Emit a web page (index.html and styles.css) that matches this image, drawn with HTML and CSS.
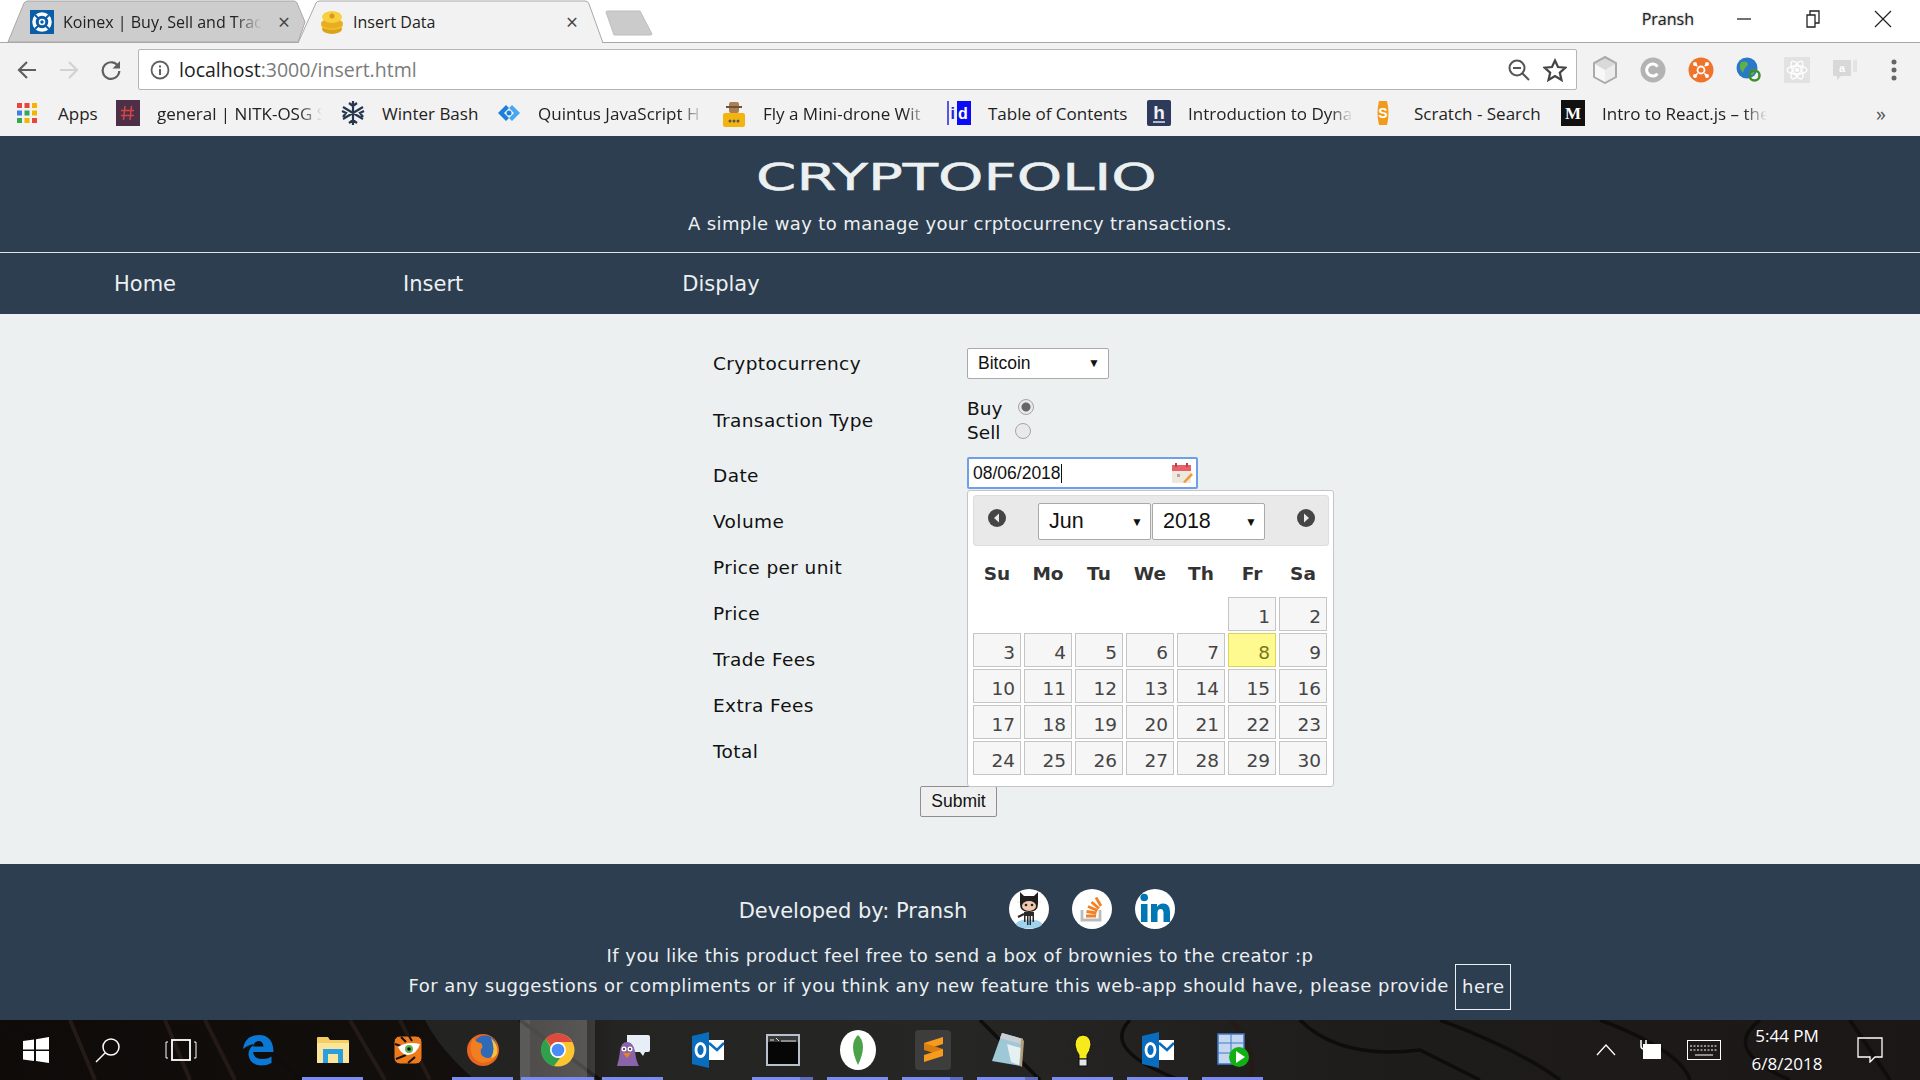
FILE: index.html
```html
<!DOCTYPE html>
<html lang="en">
<head>
    <meta charset="UTF-8">
    <title>Insert Data</title>
    <link rel="stylesheet" href="styles.css">
</head>
<body>
    <!-- browser tabs -->
    <div class="tabstrip">
        <div class="tab tab-off">
            <svg class="tab-shape" width="302" height="43" viewBox="0 0 302 43"><path d="M3 42 L19 3 Q20 1 23 1 H289 Q291 1 292 3 L300 22 L293 42 Z" fill="#cdcdcd" stroke="#a8a8a8"/></svg>
            <svg class="favicon" width="24" height="24" viewBox="0 0 24 24"><rect width="24" height="24" fill="#0a5ea8"/><circle cx="12" cy="12" r="8" fill="none" stroke="#fff" stroke-width="3.500"/><path d="M5 5 L19 19 M19 5 L5 19" stroke="#0a5ea8" stroke-width="2"/><circle cx="12" cy="12" r="2.500" fill="none" stroke="#fff" stroke-width="1.500"/></svg>
            <span class="tab-title fade">Koinex | Buy, Sell and Trac</span>
            <span class="tab-x">×</span>
        </div>
        <div class="tab tab-on">
            <svg class="tab-shape" width="310" height="43" viewBox="0 0 310 43"><path d="M1 43 L19 3 Q20 1 23 1 H288 Q291 1 292 4 L306 43 Z" fill="#f2f2f2" stroke="#a8a8a8"/><path d="M2 42.500 H305" stroke="#f2f2f2"/></svg>
            <svg class="favicon" width="24" height="24" viewBox="0 0 24 24"><ellipse cx="12" cy="19" rx="10" ry="5" fill="#dba21a"/><ellipse cx="12" cy="15" rx="11" ry="5" fill="#f2c12e"/><ellipse cx="12" cy="13.500" rx="11" ry="5" fill="#e6ae20"/><ellipse cx="12" cy="7" rx="10" ry="6" fill="#f7cf3f"/><circle cx="12" cy="6" r="2.500" fill="#d99a17"/></svg>
            <span class="tab-title">Insert Data</span>
            <span class="tab-x">×</span>
        </div>
        <svg class="newtab" width="50" height="26" viewBox="0 0 50 26"><path d="M2 2 Q2 1 4 1 H36 L48 24 Q48 25 46 25 H10 Z" fill="#cbcbcb" stroke="#bdbdbd"/></svg>
        <div class="winctl">
            <span class="user">Pransh</span>
            <svg width="16" height="16" viewBox="0 0 16 16"><path d="M1 8 H15" stroke="#222" stroke-width="1.300"/></svg>
            <svg width="16" height="18" viewBox="0 0 16 18"><path d="M2 5 H10 V17 H2 Z M5 5 V1 H14 V13 H10" fill="none" stroke="#222" stroke-width="1.300"/></svg>
            <svg width="18" height="18" viewBox="0 0 18 18"><path d="M1 1 L17 17 M17 1 L1 17" stroke="#222" stroke-width="1.200"/></svg>
        </div>
    </div>

    <!-- address bar -->
    <div class="toolbar">
        <svg width="22" height="22" viewBox="0 0 22 22"><path d="M20 11 H3 M11 3 L3 11 L11 19" fill="none" stroke="#5f5f5f" stroke-width="2.200"/></svg>
        <svg width="22" height="22" viewBox="0 0 22 22"><path d="M2 11 H19 M11 3 L19 11 L11 19" fill="none" stroke="#d2d2d2" stroke-width="2.200"/></svg>
        <svg width="22" height="22" viewBox="0 0 22 22"><path d="M18.500 8 A8.300 8.300 0 1 0 19.300 12" fill="none" stroke="#5f5f5f" stroke-width="2.200"/><path d="M20 2 V9.500 H12.500 Z" fill="#5f5f5f"/></svg>
        <div class="omnibox">
            <svg width="20" height="20" viewBox="0 0 20 20"><circle cx="10" cy="10" r="8.500" fill="none" stroke="#5f5f5f" stroke-width="1.800"/><path d="M10 9 V15 M10 5.500 V7.500" stroke="#5f5f5f" stroke-width="2"/></svg>
            <span class="url"><b>localhost</b>:3000/insert.html</span>
            <svg class="omni-zoom" width="24" height="24" viewBox="0 0 24 24"><circle cx="10" cy="10" r="7.500" fill="none" stroke="#555" stroke-width="2"/><path d="M6 10 H14 M15.500 15.500 L22 22" stroke="#555" stroke-width="2"/></svg>
            <svg width="24" height="24" viewBox="0 0 24 24"><path d="M12 2.500 L15 9 L22.500 9.700 L16.800 14.600 L18.500 22 L12 18.100 L5.500 22 L7.200 14.600 L1.500 9.700 L9 9 Z" fill="none" stroke="#444" stroke-width="2.200"/></svg>
        </div>
        <div class="exts">
            <svg width="26" height="28" viewBox="0 0 26 28"><path d="M13 1 L24 7 V21 L13 27 L2 21 V7 Z" fill="#d9d9d9" stroke="#aaa" stroke-width="2"/><path d="M13 14 L23 8 V20.500 L13 26 Z" fill="#ececec"/><path d="M3 8 L13 14 V26 L3 20.500 Z" fill="#f7f7f7"/></svg>
            <svg width="26" height="26" viewBox="0 0 26 26"><circle cx="13" cy="13" r="12.500" fill="#b3b3b3"/><path d="M17.500 9.500 A6 6 0 1 0 17.500 16.500" fill="none" stroke="#fff" stroke-width="3"/></svg>
            <svg width="26" height="26" viewBox="0 0 26 26"><circle cx="13" cy="13" r="12.500" fill="#f0732c"/><circle cx="13" cy="13" r="3.500" fill="none" stroke="#fff" stroke-width="1.800"/><path d="M6.500 6.500 L19.500 19.500 M19.500 6.500 L6.500 19.500" stroke="#fff" stroke-width="1.500" stroke-dasharray="4 10"/><circle cx="7" cy="7" r="2" fill="#fff"/><circle cx="19" cy="7" r="2" fill="#fff"/><circle cx="7" cy="19" r="2" fill="#fff"/><circle cx="19" cy="19" r="2" fill="#fff"/></svg>
            <svg width="26" height="26" viewBox="0 0 26 26"><circle cx="11" cy="11" r="10.500" fill="#2a78c8"/><path d="M5 5 Q12 3 12 8 Q8 11 7 16 Q2 11 5 5 M14 13 L20 12 L17 18 L14 18 Z" fill="#5fb04d"/><circle cx="18.500" cy="18.500" r="5" fill="none" stroke="#3d8f2c" stroke-width="2.500"/><path d="M14 13 L19 12.500 L16 16 Z" fill="#3d8f2c"/></svg>
            <svg width="26" height="26" viewBox="0 0 26 26"><rect width="26" height="26" rx="1" fill="#e2e2e2"/><ellipse cx="13" cy="13" rx="10" ry="4" fill="none" stroke="#fff" stroke-width="1.300"/><ellipse cx="13" cy="13" rx="10" ry="4" fill="none" stroke="#fff" stroke-width="1.300" transform="rotate(60 13 13)"/><ellipse cx="13" cy="13" rx="10" ry="4" fill="none" stroke="#fff" stroke-width="1.300" transform="rotate(-60 13 13)"/><circle cx="13" cy="13" r="2" fill="#fff"/></svg>
            <svg width="26" height="24" viewBox="0 0 26 24"><path d="M1 3 Q1 2 2 2 H19 V18 H9 L5 22 V18 H2 Q1 18 1 17 Z" fill="#d8d8d8"/><path d="M21 3 L25 1 V15 L21 13 Z" fill="#e4e4e4"/><text x="10" y="14" class="ext-a">a</text></svg>
            <svg class="kebab" width="6" height="22" viewBox="0 0 6 22"><circle cx="3" cy="3" r="2.500" fill="#666"/><circle cx="3" cy="11" r="2.500" fill="#666"/><circle cx="3" cy="19" r="2.500" fill="#666"/></svg>
        </div>
    </div>

    <!-- bookmarks -->
    <div class="bookmarks">
        <div class="bm bm-apps">
            <svg width="22" height="22" viewBox="0 0 22 22"><rect x="1" y="1" width="5" height="5" fill="#e8453c"/><rect x="8.500" y="1" width="5" height="5" fill="#e8453c"/><rect x="16" y="1" width="5" height="5" fill="#f4b400"/><rect x="1" y="8.500" width="5" height="5" fill="#3f7fe6"/><rect x="8.500" y="8.500" width="5" height="5" fill="#34a853"/><rect x="16" y="8.500" width="5" height="5" fill="#f4b400"/><rect x="1" y="16" width="5" height="5" fill="#34a853"/><rect x="8.500" y="16" width="5" height="5" fill="#f4b400"/><rect x="16" y="16" width="5" height="5" fill="#e8453c"/></svg>
            <span class="bm-text w-apps">Apps</span>
        </div>
        <div class="bm">
            <svg width="24" height="26" viewBox="0 0 24 26"><rect width="24" height="26" fill="#4d2f47"/><path d="M9 6 L7.500 20 M15.500 6 L14 20 M5 10.500 H18 M5 15.500 H18" stroke="#d64545" stroke-width="1.500"/></svg>
            <span class="bm-text w-long fade">general | NITK-OSG S</span>
        </div>
        <div class="bm">
            <svg width="24" height="26" viewBox="0 0 24 26"><path d="M12 1 V25 M2 7 L22 19 M22 7 L2 19 M8 3 L12 6 L16 3 M8 23 L12 20 L16 23 M1 11 L5 13 L2 17 M23 11 L19 13 L22 17" fill="none" stroke="#27364f" stroke-width="2.200"/></svg>
            <span class="bm-text w-winter">Winter Bash</span>
        </div>
        <div class="bm">
            <svg width="24" height="22" viewBox="0 0 24 22"><path d="M9 3 L1 11 L9 19 L12 16 L7 11 L12 6 Z" fill="#1c7fdb"/><path d="M15 3 L23 11 L15 19 L12 16 L17 11 L12 6 Z" fill="#45a8f0"/><circle cx="12" cy="11" r="2.500" fill="#1c7fdb"/></svg>
            <span class="bm-text w-long fade">Quintus JavaScript H</span>
        </div>
        <div class="bm">
            <svg width="24" height="28" viewBox="0 0 24 28"><rect x="1" y="14" width="22" height="14" rx="2" fill="#f3b40f"/><rect x="7" y="3" width="10" height="11" rx="2" fill="#a97f55"/><path d="M4 8 H20" stroke="#6e5334" stroke-width="2"/><circle cx="8" cy="22" r="1.500" fill="#555"/><circle cx="12" cy="22" r="1.500" fill="#555"/><circle cx="16" cy="22" r="1.500" fill="#555"/></svg>
            <span class="bm-text w-long fade">Fly a Mini-drone Wit</span>
        </div>
        <div class="bm">
            <svg width="24" height="26" viewBox="0 0 24 26"><path d="M1 1 V25" stroke="#2323e0" stroke-width="1.500"/><rect x="10" y="1" width="14" height="24" fill="#0b0bf5"/><text x="3.500" y="19" class="id-i">i</text><text x="11" y="19" class="id-d">d</text></svg>
            <span class="bm-text w-table">Table of Contents</span>
        </div>
        <div class="bm">
            <svg width="24" height="26" viewBox="0 0 24 26"><rect width="24" height="26" rx="2" fill="#2e3a5c"/><text x="12" y="19" class="h-mark">h</text><path d="M6 22 H18" stroke="#dfe3ee" stroke-width="1.500"/></svg>
            <span class="bm-text w-long fade">Introduction to Dyna</span>
        </div>
        <div class="bm bm-s">
            <svg width="22" height="28" viewBox="0 0 22 28"><path d="M7 2 H15 Q18 14 15 26 H7 Q4 14 7 2 Z" fill="#f19a1c"/><text x="11" y="19" class="s-mark">S</text></svg>
            <span class="bm-text w-scratch">Scratch - Search</span>
        </div>
        <div class="bm">
            <svg width="24" height="26" viewBox="0 0 24 26"><rect width="24" height="26" fill="#111"/><text x="12" y="19" class="m-mark">M</text></svg>
            <span class="bm-text w-long fade">Intro to React.js – the</span>
        </div>
        <span class="more">»</span>
    </div>

    <!-- the page itself -->
    <header class="site-head">
        <h1 class="logo">CRYPTOFOLIO</h1>
        <p class="tagline">A simple way to manage your crptocurrency transactions.</p>
    </header>
    <nav class="site-nav">
        <a href="#" class="nav-home">Home</a>
        <a href="#" class="nav-insert">Insert</a>
        <a href="#">Display</a>
    </nav>

    <main class="content">
        <form class="insert-form">
            <div class="row row-first">
                <label>Cryptocurrency</label>
                <div class="fake-select coin">Bitcoin<span class="caret">▼</span></div>
            </div>
            <div class="row row-radio">
                <label>Transaction Type</label>
                <div class="radios">
                    <div class="radio-line">Buy <span class="radio radio-checked"></span></div>
                    <div class="radio-line">Sell <span class="radio radio-sell"></span></div>
                </div>
            </div>
            <div class="row">
                <label>Date</label>
                <div class="date-wrap">
                    <div class="date-input">
                        <span class="date-value">08/06/2018</span>
                        <svg width="22" height="22" viewBox="0 0 22 22"><rect x="1" y="3" width="19" height="18" fill="#efe9dc"/><rect x="1" y="3" width="19" height="6" fill="#e8606a"/><path d="M5 1 V5 M16 1 V5" stroke="#b5434c" stroke-width="2"/><rect x="6" y="12" width="3" height="3" fill="#aaa"/><path d="M12 20 L20 11 L22 13 L14 21 Z" fill="#ee9a3a"/></svg>
                    </div>
                    <div class="datepicker">
                        <div class="dp-head">
                            <svg width="18" height="18" viewBox="0 0 18 18"><circle cx="9" cy="9" r="9" fill="#454545"/><path d="M11 4.500 L6 9 L11 13.500 Z" fill="#e9e9e9"/></svg>
                            <div class="dp-selects">
                                <div class="fake-select dp-sel">Jun<span class="caret">▼</span></div>
                                <div class="fake-select dp-sel">2018<span class="caret">▼</span></div>
                            </div>
                            <svg width="18" height="18" viewBox="0 0 18 18"><circle cx="9" cy="9" r="9" fill="#454545"/><path d="M7 4.500 L12 9 L7 13.500 Z" fill="#e9e9e9"/></svg>
                        </div>
                        <div class="dp-grid">
                            <span class="dow">Su</span><span class="dow">Mo</span><span class="dow">Tu</span><span class="dow">We</span><span class="dow">Th</span><span class="dow">Fr</span><span class="dow">Sa</span>
                            <span class="blank"></span><span class="blank"></span><span class="blank"></span><span class="blank"></span><span class="blank"></span><a class="day">1</a><a class="day">2</a>
                            <a class="day">3</a><a class="day">4</a><a class="day">5</a><a class="day">6</a><a class="day">7</a><a class="day today">8</a><a class="day">9</a>
                            <a class="day">10</a><a class="day">11</a><a class="day">12</a><a class="day">13</a><a class="day">14</a><a class="day">15</a><a class="day">16</a>
                            <a class="day">17</a><a class="day">18</a><a class="day">19</a><a class="day">20</a><a class="day">21</a><a class="day">22</a><a class="day">23</a>
                            <a class="day">24</a><a class="day">25</a><a class="day">26</a><a class="day">27</a><a class="day">28</a><a class="day">29</a><a class="day">30</a>
                        </div>
                    </div>
                </div>
            </div>
            <div class="row"><label>Volume</label></div>
            <div class="row"><label>Price per unit</label></div>
            <div class="row"><label>Price</label></div>
            <div class="row"><label>Trade Fees</label></div>
            <div class="row"><label>Extra Fees</label></div>
            <div class="row"><label>Total</label></div>
            <div class="submit-row"><button type="button" class="submit">Submit</button></div>
        </form>
    </main>

    <footer class="site-foot">
        <div class="dev">
            <span class="dev-name">Developed by: Pransh</span>
            <svg width="40" height="40" viewBox="0 0 40 40"><circle cx="20" cy="20" r="20" fill="#fff"/><ellipse cx="20" cy="35" rx="13" ry="4.500" fill="#9fd2ec"/><path d="M8 13 H32" stroke="#e6e6e6"/><path d="M15 23 H25 V33 H23.500 V27 H22 V36 H20.500 V27 H19.500 V36 H18 V27 H16.500 V33 H15 Z" fill="#2a2a2a"/><path d="M15 25 L9 28" stroke="#2a2a2a" stroke-width="2"/><path d="M11 3 L15 7 H25 L29 3 V15 Q29 23 20 23 Q11 23 11 15 Z" fill="#1e1e1e"/><ellipse cx="20" cy="17" rx="7" ry="5" fill="#f1c7ad"/><circle cx="17" cy="16" r="1.300" fill="#222"/><circle cx="23" cy="16" r="1.300" fill="#222"/></svg>
            <svg width="40" height="40" viewBox="0 0 40 40"><circle cx="20" cy="20" r="20" fill="#fff"/><path d="M10 21 V31 H28 V21" fill="none" stroke="#bcbbbb" stroke-width="2.800"/><path d="M14 27 H24 M14.500 22.500 L24.500 24 M16 17.500 L25.500 21.500 M19.500 13 L27 19.500 M24 8.500 L29 17" stroke="#f48024" stroke-width="2.800"/></svg>
            <svg width="40" height="40" viewBox="0 0 40 40"><circle cx="20" cy="20" r="20" fill="#fff"/><rect x="6" y="15" width="6.500" height="18" fill="#0077b5"/><circle cx="9.200" cy="8.500" r="3.800" fill="#0077b5"/><path d="M16 15 H22 V18 Q24 14.500 28 14.500 Q35 14.500 35 23 V33 H28.500 V24 Q28.500 20 25.500 20 Q22.500 20 22.500 24 V33 H16 Z" fill="#0077b5"/></svg>
        </div>
        <p class="foot-line">If you like this product feel free to send a box of brownies to the creator :p</p>
        <p class="foot-line foot-last">For any suggestions or compliments or if you think any new feature this web-app should have, please provide <a href="#" class="here">here</a></p>
    </footer>

    <!-- windows taskbar -->
    <div class="taskbar">
        <svg class="wood" width="1920" height="60" viewBox="0 0 1920 60"><path d="M425 0 H530 V60 H475 Q440 30 425 0 Z" fill="#232322"/><path d="M0 8 Q60 30 50 60 M120 0 Q150 30 135 60 M240 0 L300 60 M520 0 L600 60 M980 0 Q1010 30 1040 60 M1130 0 Q1100 30 1180 60 M1300 0 Q1340 40 1420 30 L1480 60 M1440 0 Q1520 30 1560 60 M1600 0 Q1680 30 1690 60 M1760 0 Q1720 30 1790 60 M1850 0 L1890 60" fill="none" stroke="#0f0d0c" stroke-width="3.500"/><path d="M70 0 L95 60 M165 0 L190 60 M205 0 L235 60 M350 0 L385 60 M400 0 L430 60 M1230 0 Q1260 30 1250 60" fill="none" stroke="#241b16" stroke-width="4"/></svg>
        <div class="task-left">
            <svg width="26" height="26" viewBox="0 0 26 26"><path d="M0 4 L11 2.500 V12.500 H0 Z M13 2.200 L26 0 V12.500 H13 Z M0 14 H11 V24 L0 22.500 Z M13 14 H26 V26 L13 24 Z" fill="#fff"/></svg>
            <svg width="26" height="26" viewBox="0 0 26 26"><circle cx="16" cy="10" r="8" fill="none" stroke="#fff" stroke-width="1.500"/><path d="M10 16 L1 25" stroke="#fff" stroke-width="1.500"/></svg>
            <svg class="t-view" width="32" height="22" viewBox="0 0 32 22"><rect x="7" y="1" width="18" height="20" fill="none" stroke="#fff" stroke-width="1.800"/><path d="M3 3 H1 V19 H3 M29 3 H31 V19 H29" fill="none" stroke="#fff"/></svg>
        </div>
        <div class="task-apps">
            <div class="app"><svg width="32" height="32" viewBox="0 0 32 32"><path d="M1 15 Q3 1 17 1 Q31 1 31.500 18 H11 Q12 25 20 25 Q26 25 29.500 22.500 V29 Q25 31.500 19 31.500 Q8 31 6.500 21 Q6 14 13 10 Q8 10 1 15 Z M11 12.500 H21.500 Q21 7 16.500 7 Q12.500 7 11 12.500 Z" fill="#0a78d4" fill-rule="evenodd"/></svg></div>
            <div class="app run"><svg width="32" height="28" viewBox="0 0 32 28"><path d="M0 2 Q0 1 1 1 H11 L13 4 H31 Q32 4 32 5 V27 H0 Z" fill="#f1cd62"/><path d="M0 7 H32 V26 Q32 27 31 27 H1 Q0 27 0 26 Z" fill="#fbe59a"/><path d="M6 27 V13 H26 V27 H21 V18 H11 V27 Z" fill="#2a9fe0"/></svg></div>
            <div class="app"><svg width="30" height="30" viewBox="0 0 30 30"><rect x="1" y="1" width="28" height="28" rx="6" fill="#ef7a1a" stroke="#111"/><path d="M8 2 L13 7 M16 1 L19 6 M3 24 L13 20 M15 28 L22 22 M2 9 L8 11" stroke="#111" stroke-width="2"/><path d="M5 12 Q14 6 27 9 Q24 19 15 20 Q9 20 5 12 Z" fill="#fff"/><circle cx="16" cy="14" r="4" fill="#62b24f"/><circle cx="16" cy="14" r="1.800" fill="#111"/></svg></div>
            <div class="app run"><svg width="34" height="34" viewBox="0 0 34 34"><circle cx="17" cy="17" r="16" fill="#e8641f"/><circle cx="19" cy="14" r="11.500" fill="#2e6ab8"/><path d="M7 5 Q2 15 7 24 Q14 33 25 28 Q31 24 33 15 Q30 26 21 25 Q13 23 15 16 Q18 14 15 10 Q11 10 7 5 Z" fill="#ef7f20"/><path d="M25 5 Q33 12 31 21 Q28 25 25 25 Q30 16 25 5 Z" fill="#f9c23c"/></svg></div>
            <div class="app active"><svg width="34" height="34" viewBox="0 0 34 34"><circle cx="17" cy="17" r="16.500" fill="#fbc531"/><path d="M17 .5 A16.500 16.500 0 0 1 31.300 9 H17 A8 8 0 0 0 9.700 13.500 L4.500 5.500 A16.500 16.500 0 0 1 17 .5 Z" fill="#dd4b3e"/><path d="M4.500 5.500 L11.500 18 A8 8 0 0 0 19 25 L13 33 A16.500 16.500 0 0 1 4.500 5.500 Z" fill="#2fa04b"/><circle cx="17" cy="17" r="8" fill="#fff"/><circle cx="17" cy="17" r="6.300" fill="#4a8bf5"/></svg></div>
            <div class="app run"><svg width="34" height="34" viewBox="0 0 34 34"><path d="M11 2 H32 Q34 2 34 4 V17 Q34 19 32 19 H29 L27 23 L24 19 H11 Z" fill="#e8eef8"/><path d="M1 33 Q3 27 4 18 Q5 9 11 9 Q17 9 19 18 Q20 28 23 33 Z" fill="#8a63a8"/><circle cx="8" cy="16" r="2.500" fill="#fff"/><circle cx="14" cy="16" r="2.500" fill="#fff"/><circle cx="8" cy="16" r="1" fill="#222"/><circle cx="14" cy="16" r="1" fill="#222"/><path d="M7 20 H15 L11 25 Z" fill="#e8841f"/></svg></div>
            <div class="app"><svg width="32" height="36" viewBox="0 0 32 36"><path d="M0 4 L17 0 V36 L0 32 Z" fill="#0a6cbd"/><path d="M17 8 H32 V28 H17 Z" fill="#fff"/><path d="M17 11 L25 18 L32 11" fill="none" stroke="#0a6cbd" stroke-width="2.500"/><ellipse cx="8.500" cy="18" rx="4.500" ry="6.500" fill="none" stroke="#fff" stroke-width="2.800"/></svg></div>
            <div class="app run stack"><svg width="34" height="32" viewBox="0 0 34 32"><rect width="34" height="32" fill="#b7c2cc"/><rect x="2" y="2" width="30" height="6" fill="#3a3a3a"/><rect x="2" y="8" width="30" height="22" fill="#060606"/><path d="M4 6 H8 M10 4 L13 7 M15 7 H30" stroke="#ddd"/></svg></div>
            <div class="app run"><svg width="36" height="40" viewBox="0 0 36 40"><ellipse cx="18" cy="20" rx="18" ry="20" fill="#fff"/><path d="M18 5 Q28 14 18 35 Q8 14 18 5 Z" fill="#4ba24a"/></svg></div>
            <div class="app run stack"><svg width="36" height="40" viewBox="0 0 36 40"><rect width="36" height="40" rx="4" fill="#3d3d3d"/><path d="M28 7 L9 13 V20 L28 14 Z" fill="#f79b1e"/><path d="M9 13 L28 19 V26 L9 20 Z" fill="#d87d10"/><path d="M28 19 L9 25 V32 L28 26 Z" fill="#f79b1e"/></svg></div>
            <div class="app run stack"><svg width="34" height="36" viewBox="0 0 34 36"><path d="M11 1 L32 7 L30 34 L1 29 Z" fill="#9fc8d6"/><path d="M11 1 L32 7 L30 12 L9 6 Z" fill="#c9ced3"/><path d="M16 12 L30 16 L28 33 L20 30 Z" fill="#e6f0f3"/><path d="M30 6 L33 9 L31 35 L29 34 Z" fill="#b3a07a"/></svg></div>
            <div class="app run"><svg width="30" height="36" viewBox="0 0 30 36"><path d="M4 3 L7 7 M26 3 L23 7 M0 14 H4 M26 14 H30 M2 26 L6 22 M28 26 L24 22" stroke="#222" stroke-width="1.500"/><path d="M15 3 Q23 4 23 13 Q22 19 19 23 V27 H11 V23 Q8 19 7 13 Q7 4 15 3 Z" fill="#f7ea1c" stroke="#111"/><rect x="11" y="27" width="8" height="7" fill="#e4e4e4" stroke="#111"/></svg></div>
            <div class="app run"><svg width="32" height="36" viewBox="0 0 32 36"><path d="M0 4 L17 0 V36 L0 32 Z" fill="#0a6cbd"/><path d="M17 8 H32 V28 H17 Z" fill="#fff"/><path d="M17 11 L25 18 L32 11" fill="none" stroke="#0a6cbd" stroke-width="2.500"/><ellipse cx="8.500" cy="18" rx="4.500" ry="6.500" fill="none" stroke="#fff" stroke-width="2.800"/></svg></div>
            <div class="app run"><svg width="32" height="34" viewBox="0 0 32 34"><rect x="1" y="1" width="26" height="30" fill="#c5d8f0" stroke="#3f78c8" stroke-width="1.500"/><path d="M1 10 H27 M1 20 H27 M14 1 V31" stroke="#3f78c8"/><circle cx="22" cy="24" r="10" fill="#12b012"/><path d="M19 18 L28 24 L19 30 Z" fill="#fff"/></svg></div>
        </div>
        <div class="tray">
            <svg width="20" height="12" viewBox="0 0 20 12"><path d="M1 11 L10 1 L19 11" fill="none" stroke="#fff" stroke-width="1.300"/></svg>
            <svg class="t-batt" width="26" height="24" viewBox="0 0 26 24"><rect x="6" y="6" width="18" height="15" fill="#fff"/><path d="M4 2 V8 Q4 11 7 11 Q9 11 9 8 V2" fill="none" stroke="#fff" stroke-width="1.500"/></svg>
            <svg class="t-keys" width="34" height="20" viewBox="0 0 34 20"><rect x=".5" y=".5" width="33" height="19" fill="none" stroke="#fff"/><path d="M3 6 H31 M3 10 H31" stroke="#fff" stroke-dasharray="2 1.500"/><path d="M8 15 H26" stroke="#fff"/></svg>
            <div class="clock"><span>5:44 PM</span><span>6/8/2018</span></div>
            <svg width="26" height="26" viewBox="0 0 26 26"><path d="M1 1 H25 V20 H18 L13 25 V20 H1 Z" fill="none" stroke="#fff" stroke-width="1.300"/></svg>
        </div>
    </div>
</body>
</html>
```

FILE: styles.css
```css
*{
    margin: 0;
    padding: 0;
    box-sizing: border-box;
}
body{
    width: 1920px;
    height: 1080px;
    overflow: hidden;
    display: flex;
    flex-direction: column;
    background: #ecf0f1;
    font-family: "DejaVu Sans", sans-serif;
}
svg{
    flex: none;
    display: block;
}
.fade{
    -webkit-mask-image: linear-gradient(to right, #000 86%, transparent 100%);
}

/* tabs */
.tabstrip{
    height: 43px;
    background: #fff;
    border-bottom: 1px solid #a8a8a8;
    display: flex;
    padding-left: 5px;
    font-family: "Open Sans", sans-serif;
}
.tab{
    position: relative;
    width: 300px;
    height: 43px;
    display: flex;
    align-items: center;
    font-size: 16px;
    color: #222;
}
.tab-shape{
    position: absolute;
    left: 0;
    top: 0;
}
.tab-off{
    padding: 0 15px 0 25px;
}
.tab-on{
    padding: 0 19px 0 23px;
    margin-left: -8px;
}
.tab .favicon{
    position: relative;
    margin-right: 9px;
}
.tab-title{
    position: relative;
    white-space: nowrap;
}
.tab-x{
    position: relative;
    font-size: 21px;
    margin-left: auto;
    color: #444;
}
.newtab{
    margin: 10px 0 0 7px;
}
.winctl{
    margin-left: auto;
    display: flex;
    align-items: center;
    height: 38px;
    padding-right: 28px;
    gap: 53px;
}
.user{
    font-size: 16px;
    color: #222;
    text-shadow: 0 0 2px #999;
    margin-right: -11px;
}

/* address bar */
.toolbar{
    height: 50px;
    background: #f2f2f2;
    display: flex;
    align-items: center;
    padding: 3px 0 0 16px;
    gap: 20px;
}
.omnibox{
    width: 1439px;
    height: 41px;
    margin-left: -4px;
    background: #fff;
    border: 1px solid #b5b5b5;
    border-radius: 2px;
    display: flex;
    align-items: center;
    padding: 0 9px 0 11px;
}
.url{
    margin-left: 9px;
    font: 19.500px "Open Sans", sans-serif;
    color: #7b7b7b;
}
.url b{
    font-weight: 400;
    color: #222;
}
.omni-zoom{
    margin-left: auto;
    margin-right: 12px;
}
.exts{
    display: flex;
    align-items: center;
    gap: 22px;
    margin-left: -5px;
}
.ext-a{
    font: 700 11px "Liberation Sans", sans-serif;
    fill: #fff;
    text-anchor: middle;
}
.kebab{
    margin-left: 11px;
}

/* bookmarks */
.bookmarks{
    height: 43px;
    background: #f2f2f2;
    display: flex;
    align-items: center;
    padding: 0 0 3px 16px;
    font: 17px "Open Sans", sans-serif;
    color: #222;
}
.bm{
    display: flex;
    align-items: center;
    gap: 17px;
    margin-right: 19px;
}
.bm-apps{
    gap: 20px;
}
.bm-s{
    gap: 20px;
}
.bm-text{
    white-space: nowrap;
}
.w-apps{ width: 39px; }
.w-long{ width: 165px; }
.w-winter{ width: 96px; }
.w-table{ width: 140px; }
.w-scratch{ width: 128px; }
.id-i{
    font: 700 16px "Liberation Sans", sans-serif;
    fill: #2323e0;
}
.id-d{
    font: 700 16px "Liberation Sans", sans-serif;
    fill: #fff;
}
.h-mark{
    font: 700 19px "Liberation Sans", sans-serif;
    fill: #eef0f6;
    text-anchor: middle;
}
.s-mark{
    font: 700 14px "Liberation Sans", sans-serif;
    fill: #fff;
    text-anchor: middle;
}
.m-mark{
    font: 700 17px "Liberation Serif", serif;
    fill: #fff;
    text-anchor: middle;
}
.more{
    margin-left: 90px;
    color: #555;
    font-size: 20px;
}

/* site header */
.site-head{
    height: 117px;
    background: #2c3e50;
    border-bottom: 1px solid #dfe4e8;
    text-align: center;
    color: #ecf0f1;
    padding-top: 19px;
}
.logo{
    display: table;
    margin: 0 auto;
    font-size: 37px;
    font-weight: 400;
    line-height: 46px;
    -webkit-text-stroke: .5px #ecf0f1;
    transform: translateX(-4px) scaleX(1.560);
}
.tagline{
    margin-top: 11px;
    font-size: 18px;
    letter-spacing: .4px;
    line-height: 24px;
}
.site-nav{
    height: 61px;
    background: #2c3e50;
    display: flex;
    align-items: center;
    padding-left: 114px;
}
.site-nav a{
    color: #ecf0f1;
    text-decoration: none;
    font-size: 21px;
}
.nav-home{
    margin-right: 227px;
}
.nav-insert{
    margin-right: 219px;
}

/* form */
.content{
    flex: 1;
    padding: 24px 0 0 713px;
    font-size: 18.500px;
    color: #111;
}
.row{
    display: flex;
    align-items: center;
    height: 46px;
}
.row-first{
    height: 52px;
}
.row-radio{
    height: 62px;
}
.row label{
    width: 254px;
    flex: none;
    letter-spacing: .4px;
}
.row-first label,
.row-radio label{
    margin-top: -2px;
}
.fake-select{
    background: #fff;
    border: 1px solid #a9a9a9;
    border-radius: 2px;
    display: flex;
    align-items: center;
    justify-content: space-between;
    font-family: "Liberation Sans", sans-serif;
    color: #111;
}
.coin{
    width: 142px;
    height: 31px;
    padding: 0 8px 0 10px;
    font-size: 17.500px;
    margin-top: -2px;
}
.caret{
    font-size: 12px;
}
.radios{
    line-height: 24px;
}
.radio-line{
    display: flex;
    align-items: center;
    gap: 13px;
}
.radio{
    width: 16px;
    height: 16px;
    border-radius: 50%;
    background: #e9e9e9;
    border: 1px solid #a5a5a5;
    position: relative;
    top: -2px;
    display: block;
}
.radio-checked{
    margin-left: 3px;
    background: radial-gradient(circle, #666 0, #666 4px, #e9e9e9 5px);
}
.radio-sell{
    margin-left: 2px;
}
.date-wrap{
    position: relative;
    margin-top: -4px;
}
.date-input{
    width: 231px;
    height: 32px;
    background: #fff;
    border: 2px solid #6f9fe8;
    border-radius: 2px;
    display: flex;
    align-items: center;
    justify-content: space-between;
    padding: 0 3px 0 4px;
    font: 17.500px "Liberation Sans", sans-serif;
}
.date-value{
    border-right: 1px solid #111;
    line-height: 19px;
}
.datepicker{
    position: absolute;
    left: 0;
    top: 33px;
    width: 367px;
    height: 297px;
    background: #fff;
    border: 1px solid #c5c5c5;
    border-radius: 3px;
    padding: 4px 4px 0 5px;
    z-index: 2;
}
.dp-head{
    height: 51px;
    background: #e9e9e9;
    border: 1px solid #ddd;
    border-radius: 3px;
    display: flex;
    align-items: center;
    justify-content: space-between;
    padding: 0 13px 0 14px;
}
.dp-head svg{
    margin-top: -6px;
}
.dp-selects{
    display: flex;
    gap: 1px;
    margin-top: 2px;
}
.dp-sel{
    width: 113px;
    height: 37px;
    font-size: 21.500px;
    padding: 0 7px 0 10px;
}
.dp-grid{
    display: grid;
    grid-template-columns: repeat(7, 48px);
    grid-template-rows: 49px repeat(5, 34px);
    column-gap: 3px;
    row-gap: 2px;
    font-size: 18.500px;
}
.dow{
    text-align: center;
    font-weight: 700;
    line-height: 55px;
    color: #333;
}
.day{
    background: #f6f6f6;
    border: 1px solid #c5c5c5;
    text-align: right;
    padding-right: 5px;
    line-height: 37px;
    color: #454545;
}
.today{
    background: #fffa90;
    border-color: #dad55e;
    color: #777620;
}
.submit-row{
    padding: 12px 0 0 207px;
}
.submit{
    width: 77px;
    height: 31px;
    background: #efefef;
    border: 1px solid #8f8f8f;
    border-radius: 2px;
    font: 17.500px "Liberation Sans", sans-serif;
    color: #111;
}

/* footer */
.site-foot{
    height: 156px;
    background: #2c3e50;
    color: #ecf0f1;
    text-align: center;
    padding-top: 25px;
    font-size: 18px;
}
.dev{
    display: flex;
    justify-content: center;
    align-items: center;
    gap: 23px;
    height: 40px;
    padding-right: 6px;
}
.dev-name{
    font-size: 21px;
    margin-right: 19px;
    padding-top: 4px;
}
.foot-line{
    margin-top: 15px;
    line-height: 24px;
    letter-spacing: .46px;
}
.foot-last{
    margin-top: -4px;
}
.here{
    display: inline-block;
    color: #ecf0f1;
    text-decoration: none;
    border: 1px solid #ecf0f1;
    padding: 10px 6px;
    vertical-align: middle;
}

/* taskbar */
.taskbar{
    height: 60px;
    background: linear-gradient(to right, #0e0b09 0, #130f0d 27%, #242423 32%, #262625 50%, #1f1d1c 70%, #1a1716 100%);
    display: flex;
    align-items: center;
    position: relative;
    color: #fff;
}
.wood{
    position: absolute;
    left: 0;
    top: 0;
}
.task-left{
    position: relative;
    display: flex;
    align-items: center;
    width: 220px;
    padding-left: 23px;
    gap: 46px;
}
.t-view{
    margin-left: -2px;
}
.task-apps{
    position: relative;
    display: flex;
    height: 60px;
}
.app{
    width: 75px;
    height: 60px;
    display: flex;
    align-items: center;
    justify-content: center;
    position: relative;
}
.app svg{
    position: relative;
    z-index: 1;
}
.run::after,
.active::after{
    content: "";
    position: absolute;
    left: 7px;
    right: 7px;
    bottom: 0;
    height: 3px;
    background: #7a8cf0;
}
.stack::after{
    background: linear-gradient(to right, #7a8cf0 78%, #5e6cc0 78%);
}
.active{
    background: linear-gradient(to right, rgba(255,255,255,.25) 90%, rgba(255,255,255,.12) 90%);
}
.active::after{
    left: 1px;
    right: 1px;
}
.tray{
    position: relative;
    display: flex;
    align-items: center;
    margin-left: auto;
    padding-right: 37px;
}
.t-batt{
    margin-left: 21px;
}
.t-keys{
    margin-left: 24px;
}
.clock{
    width: 130px;
    display: flex;
    flex-direction: column;
    align-items: center;
    gap: 8px;
    font: 17px "Open Sans", sans-serif;
    line-height: 20px;
    margin: 0 5px 0 1px;
}
```
